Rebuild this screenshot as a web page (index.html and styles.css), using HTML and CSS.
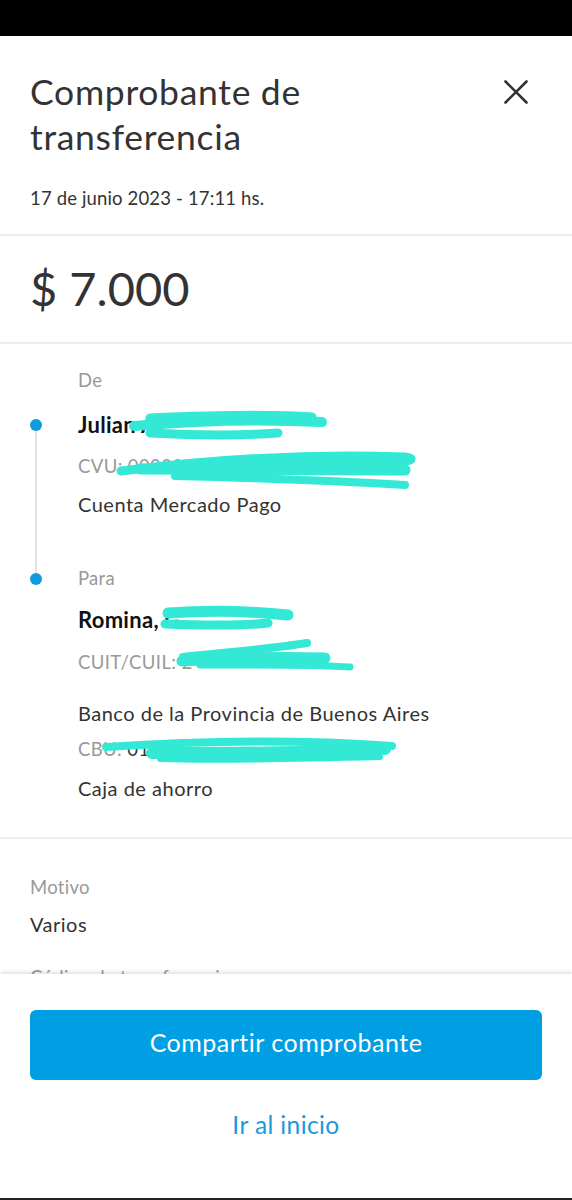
FILE: index.html
```html
<!DOCTYPE html>
<html lang="es">
<head>
  <meta charset="UTF-8" />
  <meta name="viewport" content="width=device-width, initial-scale=1" />
  <title>Comprobante de transferencia</title>
  <link rel="stylesheet" href="styles.css">
</head>
<body>
  <div class="page">
    <div class="status-bar"></div>

    <div class="content">
      <div class="header">
        <div class="title-row">
          <h1 class="title">Comprobante de<br>transferencia</h1>
          <svg class="close" width="24" height="24" viewBox="0 0 24 24" aria-label="Cerrar">
            <path d="M1.5 1.5 L22.5 22.5 M22.5 1.5 L1.5 22.5" stroke="#333" stroke-width="2.6" stroke-linecap="round" fill="none"/>
          </svg>
        </div>
        <p class="date">17 de junio 2023 - 17:11 hs.</p>
      </div>

      <div class="amount">$ 7.000</div>

      <div class="timeline">
        <div class="rail">
          <span class="dot"></span>
          <span class="line"></span>
          <span class="dot"></span>
        </div>
        <div class="parties">
          <div class="party">
            <p class="label">De</p>
            <p class="name">Julian A.</p>
            <p class="ident">CVU: 0000003</p>
            <p class="info info-first">Cuenta Mercado Pago</p>
          </div>
          <div class="party party-to">
            <p class="label">Para</p>
            <p class="name">Romina, G.</p>
            <p class="ident">CUIT/CUIL: 2</p>
            <p class="info info-bank">Banco de la Provincia de Buenos Aires</p>
            <p class="ident ident-cbu">CBU: <span class="cbu-num">0140</span></p>
            <p class="info info-last">Caja de ahorro</p>
          </div>
        </div>
      </div>

      <div class="reason">
        <p class="label">Motivo</p>
        <p class="info info-reason">Varios</p>
        <p class="label label-code">Código de transferencia</p>
      </div>

      <!-- tachaduras de los datos privados -->
      <svg class="scribbles" width="572" height="936" viewBox="0 36 572 936">
        <g stroke="#33e8d4" stroke-linecap="round" stroke-linejoin="round" fill="none">
          <path d="M134 426 C190 421 260 419 322 422" stroke-width="10"/>
          <path d="M150 418 C220 415 270 414 312 417" stroke-width="9"/>
          <path d="M150 433 C210 436 250 435 278 433" stroke-width="9"/>
          <path d="M121 471 C200 461 300 453 405 457 C420 459 405 463 380 463 C300 463 220 467 150 469" stroke-width="9"/>
          <path d="M140 469 C240 469 330 470 405 470" stroke-width="11"/>
          <path d="M175 476 C260 478 340 481 405 485" stroke-width="8"/>
          <path d="M168 613 C210 610 250 611 288 615" stroke-width="11"/>
          <path d="M165 624 C220 626 250 625 268 623" stroke-width="9"/>
          <path d="M183 657 C230 652 270 649 307 643" stroke-width="8"/>
          <path d="M182 661 C240 657 290 657 325 658" stroke-width="11"/>
          <path d="M200 665 C260 665 310 664 350 667" stroke-width="7"/>
          <path d="M106 747 C180 742 280 738 392 746" stroke-width="8"/>
          <path d="M152 753 C230 753 300 753 385 749" stroke-width="12"/>
          <path d="M160 759 C220 761 300 759 380 757" stroke-width="6"/>
        </g>
      </svg>
    </div>

    <div class="footer">
      <button class="btn-share" type="button">Compartir comprobante</button>
      <a class="link-home" href="#">Ir al inicio</a>
    </div>
  </div>
</body>
</html>
```

FILE: styles.css
```css
body {
  margin: 0;
  padding: 0;
  background-color: #fff;
  font-family: Lato, "Noto Sans", sans-serif;
  color: #333;
}
p {
  margin: 0;
}
.page {
  width: 572px;
  height: 1200px;
  display: flex;
  flex-direction: column;
  overflow: hidden;
}
.status-bar {
  height: 36px;
  background: #000;
  flex-shrink: 0;
}
.content {
  position: relative;
  flex: 1;
  overflow: hidden;
}
.header {
  padding: 33px 30px 0 30px;
  border-bottom: 2px solid #ededed;
  height: 165px;
  box-sizing: content-box;
}
.title-row {
  display: flex;
  justify-content: space-between;
  align-items: flex-start;
}
.title {
  margin: 0;
  font-size: 35.5px;
  font-weight: 400;
  line-height: 45px;
  letter-spacing: 0.7px;
  color: #333;
}
.close {
  margin: 11px 14px 0 0;
}
.date {
  margin-top: 27px;
  font-size: 18.5px;
  line-height: 24px;
  letter-spacing: 0.15px;
  color: #333;
}
.amount {
  height: 106px;
  line-height: 104px;
  padding: 0 30px;
  font-size: 47px;
  color: #333;
  border-bottom: 2px solid #ededed;
}
.timeline {
  display: flex;
  padding: 24px 0 37px 30px;
  border-bottom: 2px solid #ededed;
}
.rail {
  width: 12px;
  margin-right: 36px;
  padding-top: 51px;
  display: flex;
  flex-direction: column;
  align-items: center;
}
.dot {
  width: 12px;
  height: 12px;
  border-radius: 50%;
  background: #0f9be0;
}
.line {
  width: 2px;
  height: 142px;
  background: #e4e4e4;
}
.label {
  font-size: 18.5px;
  line-height: 24px;
  letter-spacing: 0.3px;
  color: #999;
}
.name {
  margin-top: 21px;
  font-size: 22px;
  font-weight: 700;
  line-height: 24px;
  letter-spacing: 0.3px;
  color: #111;
}
.ident {
  margin-top: 17px;
  font-size: 18.5px;
  line-height: 24px;
  letter-spacing: 0.4px;
  color: #999;
}
.info {
  font-size: 20px;
  line-height: 24px;
  letter-spacing: 0.5px;
  color: #333;
}
.info-first {
  margin-top: 14px;
}
.party-to {
  margin-top: 50px;
}
.party-to .name {
  margin-top: 18px;
}
.party-to .ident {
  margin-top: 18px;
}
.info-bank {
  margin-top: 27px;
}
.party-to .ident-cbu {
  margin-top: 12px;
}
.cbu-num {
  color: #333;
}
.info-last {
  margin-top: 15px;
}
.reason {
  padding: 36px 30px 0 30px;
}
.info-reason {
  margin-top: 13px;
}
.label-code {
  margin-top: 29px;
}
.scribbles {
  position: absolute;
  top: 0;
  left: 0;
  pointer-events: none;
}
.footer {
  flex-shrink: 0;
  height: 226px;
  box-sizing: border-box;
  padding: 36px 30px 0 30px;
  background: #fff;
  border-bottom: 2px solid #222;
  box-shadow: 0 -2px 4px rgba(0, 0, 0, 0.12);
  display: flex;
  flex-direction: column;
  align-items: center;
  position: relative;
}
.btn-share {
  width: 100%;
  height: 70px;
  padding: 0 0 6px 0;
  border: none;
  border-radius: 6px;
  background: #009ee3;
  color: #fff;
  font-family: Lato, "Noto Sans", sans-serif;
  font-size: 25px;
  letter-spacing: 0.5px;
  cursor: pointer;
}
.link-home {
  margin-top: 30px;
  font-size: 24.5px;
  line-height: 30px;
  letter-spacing: 0.4px;
  color: #1a9ad8;
  text-decoration: none;
}
```
